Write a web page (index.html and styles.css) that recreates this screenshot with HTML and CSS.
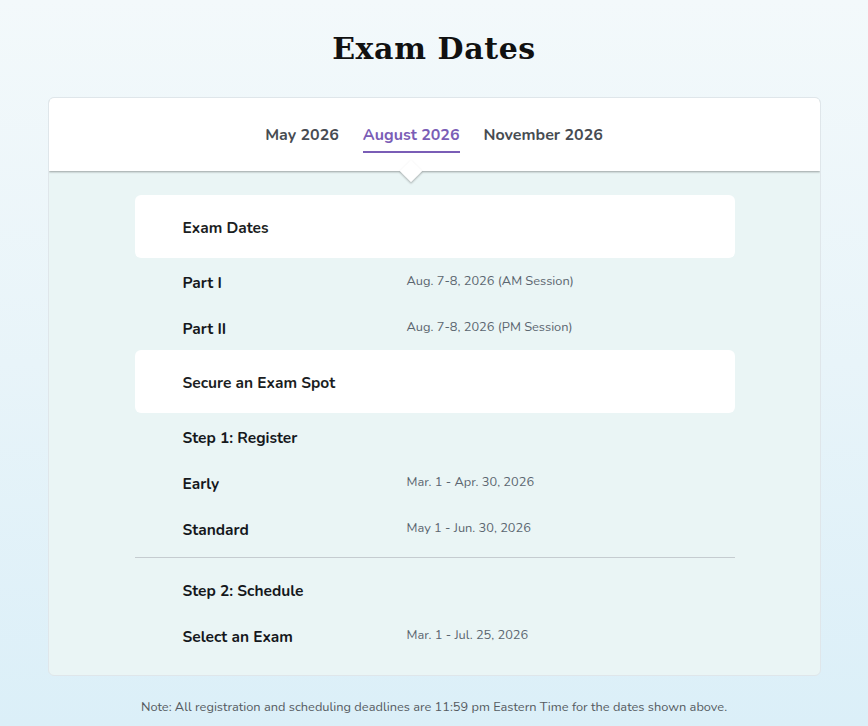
FILE: index.html
```html
<!DOCTYPE html>
<html lang="en">
<head>
<meta charset="utf-8">
<title>Exam Dates</title>
<link rel="stylesheet" href="styles.css">
</head>
<body>
<main class="page">
  <h1 class="title">Exam Dates</h1>
  <section class="card">
    <nav class="tabs">
      <a class="tab">May 2026</a>
      <a class="tab active">August 2026</a>
      <a class="tab">November 2026</a>
    </nav>
    <div class="content">
      <div class="panel">
        <div class="group-head">Exam Dates</div>
        <div class="row"><span class="label">Part I</span><span class="value">Aug. 7-8, 2026 (AM Session)</span></div>
        <div class="row"><span class="label">Part II</span><span class="value">Aug. 7-8, 2026 (PM Session)</span></div>
        <div class="group-head">Secure an Exam Spot</div>
        <div class="row"><span class="label">Step 1: Register</span></div>
        <div class="row"><span class="label">Early</span><span class="value">Mar. 1 - Apr. 30, 2026</span></div>
        <div class="row"><span class="label">Standard</span><span class="value">May 1 - Jun. 30, 2026</span></div>
        <hr class="divider">
        <div class="row"><span class="label">Step 2: Schedule</span></div>
        <div class="row"><span class="label">Select an Exam</span><span class="value">Mar. 1 - Jul. 25, 2026</span></div>
      </div>
    </div>
  </section>
  <p class="note">Note: All registration and scheduling deadlines are 11:59 pm Eastern Time for the dates shown above.</p>
</main>
</body>
</html>
```

FILE: styles.css
```css
* { box-sizing: border-box; }
html, body { margin: 0; padding: 0; }
body {
  font-family: "Nunito", "Lato", "Open Sans", sans-serif;
  background: linear-gradient(180deg, #f3f9fb 0%, #e8f4f9 50%, #dbeff8 100%);
  min-height: 726px;
  color: #1b1e22;
}
.page {
  width: 773px;
  margin: 0 auto;
  padding-top: 28px;
}
.title {
  margin: 0 0 27px;
  text-align: center;
  font-family: "DejaVu Serif", "Liberation Serif", serif;
  font-weight: bold;
  font-size: 30px;
  line-height: 42px;
  letter-spacing: 0.6px;
  color: #111;
}
.card {
  background: #eaf5f5;
  border: 1px solid #dfe6ea;
  border-radius: 6px;
  overflow: hidden;
}
.tabs {
  position: relative;
  height: 73px;
  background: #fff;
  display: flex;
  justify-content: center;
  align-items: center;
  gap: 24px;
  box-shadow: 0 1px 2px rgba(0,0,0,0.35);
  z-index: 1;
}
.tab {
  position: relative;
  font-size: 16px;
  font-weight: bold;
  color: #474c52;
  line-height: 22px;
  padding-top: 7px;
  padding-bottom: 5px;
  border-bottom: 2px solid transparent;
}
.tab.active {
  color: #7a5db6;
  border-bottom-color: #7a5db6;
}
.tab.active::after {
  content: "";
  position: absolute;
  left: 50%;
  bottom: -28px;
  width: 16px;
  height: 16px;
  margin-left: -8px;
  background: #fff;
  transform: rotate(45deg);
  box-shadow: 1px 1px 2px rgba(0,0,0,0.25);
}
.content {
  padding: 24px 0 17px;
}
.panel {
  width: 600px;
  margin: 0 85px 0 86px;
}
.group-head {
  background: #fff;
  border-radius: 6px;
  height: 63px;
  display: flex;
  align-items: center;
  padding-left: 48px;
  padding-top: 2px;
  font-size: 15.5px;
  font-weight: 700;
  color: #1b1e22;
}
.row {
  height: 46px;
  display: flex;
  align-items: center;
  padding-left: 48px;
}
.label {
  width: 224px;
  flex: none;
  font-size: 15.5px;
  font-weight: 700;
  color: #15181c;
  padding-top: 3px;
}
.value {
  font-size: 12.8px;
  color: #5b6670;
}
.divider {
  border: 0;
  border-top: 1px solid #c5ccd0;
  margin: 6px 0 8px;
}
.note {
  text-align: center;
  font-size: 12.8px;
  color: #555b61;
  margin: 22px 0 0;
}
```
